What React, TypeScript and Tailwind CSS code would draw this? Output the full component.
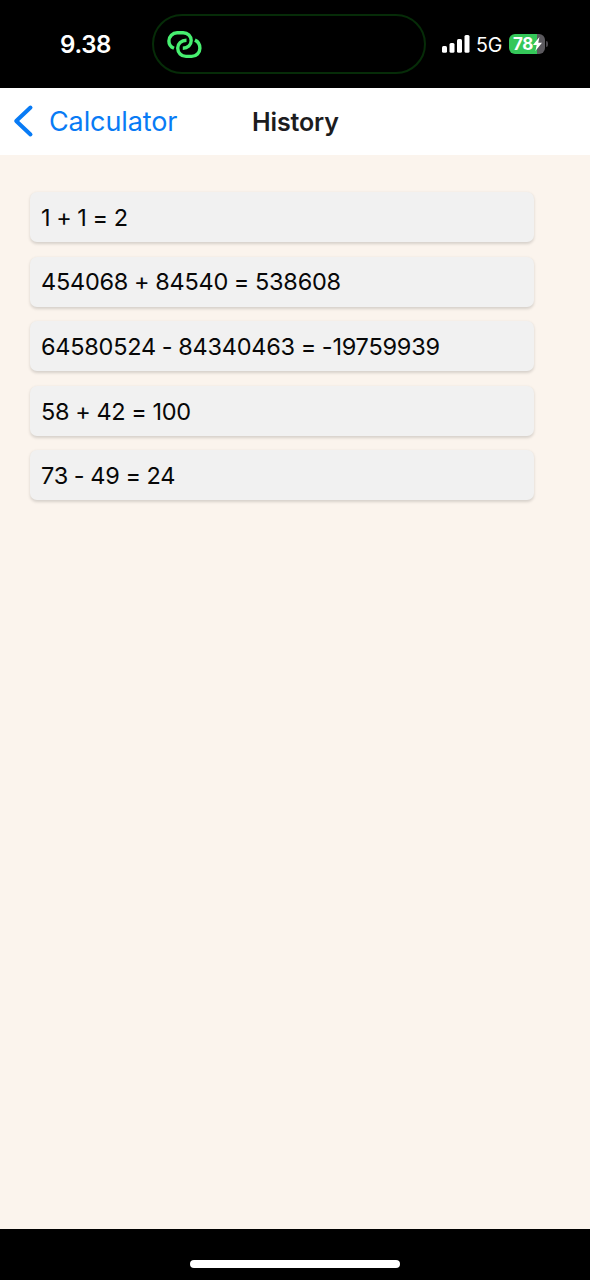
const rows = ['1 + 1 = 2', '454068 + 84540 = 538608', '64580524 - 84340463 = -19759939', '58 + 42 = 100', '73 - 49 = 24'];

function LinkIcon() {
  return (
    <svg width="38" height="32" viewBox="0 0 38 32" fill="none" stroke="#47f070" strokeWidth="3.4">
      <path d="M8 20.3C4.8 19 2.9 16.2 2.9 13C2.9 8.4 6.6 4.8 11.2 4.8H17.2C21.8 4.8 25.2 8.2 25.2 12.6C25.2 16.9 21.8 20.2 16.8 20.2" />
      <path d="M20.5 12.2C15.3 12.2 11.7 15.6 11.7 20C11.7 24.7 15.3 28.4 20 28.4H25.6C30.3 28.4 33.9 24.7 33.9 20.2C33.9 16.6 32 13.5 28.9 12.1" />
    </svg>
  );
}

function Battery() {
  return (
    <div className="ml-[6px] flex items-center">
      <div className="flex h-5 w-9 items-center overflow-hidden rounded-[6px] bg-gradient-to-r from-[#34c759] from-78% to-[#5b595e] to-78% pl-[4px]">
        <span className="text-[17px] leading-5 font-bold tracking-[-0.3px] text-white">78</span>
        <svg className="shrink-0" width="9" height="14" viewBox="0 0 9 14" fill="white"><path d="M6.4 0 0 8h3.7L2.4 14 9 5.8H5.3Z" /></svg>
      </div>
      <div className="ml-px h-[6px] w-[2px] rounded-r-full bg-[#47454a]" />
    </div>
  );
}

export default function App() {
  return (
    <div className="flex h-[1280px] w-[590px] flex-col bg-[#fbf4ed] font-['Inter',sans-serif]">
      <div className="flex h-[88px] shrink-0 bg-black text-white">
        <div className="w-[152px] pt-[30px] pl-[60px] text-[24px] leading-[30px] font-semibold tracking-[-0.3px]">9.38</div>
        <div className="mt-[14px] h-[60px] w-[274px] rounded-full border-2 border-[#062c08] pt-[12px] pl-[12px]"><LinkIcon /></div>
        <div className="flex items-start pt-[34px] pl-[16px]">
          <svg width="28" height="20" viewBox="0 0 28 20" fill="white"><rect y="12" width="5" height="6.7" rx="1.5" /><rect x="7.5" y="9" width="5" height="9.7" rx="1.5" /><rect x="15" y="5" width="5" height="13.7" rx="1.5" /><rect x="22.5" y="1" width="5" height="17.7" rx="1.5" /></svg>
          <div className="ml-[6px] w-[27px] text-[19.5px] leading-[22px]">5G</div>
          <Battery />
        </div>
      </div>
      <header className="flex h-[67px] shrink-0 items-center bg-white">
        <svg className="ml-[13px] -mt-[2px]" width="22" height="34" viewBox="0 0 22 34" fill="none" stroke="#087bf5" strokeWidth="4" strokeLinecap="round" strokeLinejoin="round"><path d="M17.5 3.5 3.2 17l14.3 13.5" /></svg>
        <div className="ml-[14px] w-[203px] pt-px text-[27px] tracking-[-0.1px] text-[#087bf5]">Calculator</div>
        <div className="pt-[2px] text-[25px] font-semibold tracking-[-0.15px] text-[#1c1c1e]">History</div>
      </header>
      <main className="flex flex-1 flex-col gap-[14.6px] pt-[37px] pl-[30px]">
        {rows.map((row) => (
          <div key={row} className="flex h-[50px] w-[504px] items-center rounded-[7px] bg-[#f1f1f1] pt-px pl-[11px] text-[23.5px] tracking-[-0.24px] [word-spacing:-0.5px] text-[#080808] shadow-[0_1.5px_3px_rgba(0,0,0,0.15)]">{row}</div>
        ))}
      </main>
      <footer className="flex h-[51px] justify-center bg-black pt-[31px]"><div className="h-[8px] w-[210px] rounded-full bg-white" /></footer>
    </div>
  );
}
